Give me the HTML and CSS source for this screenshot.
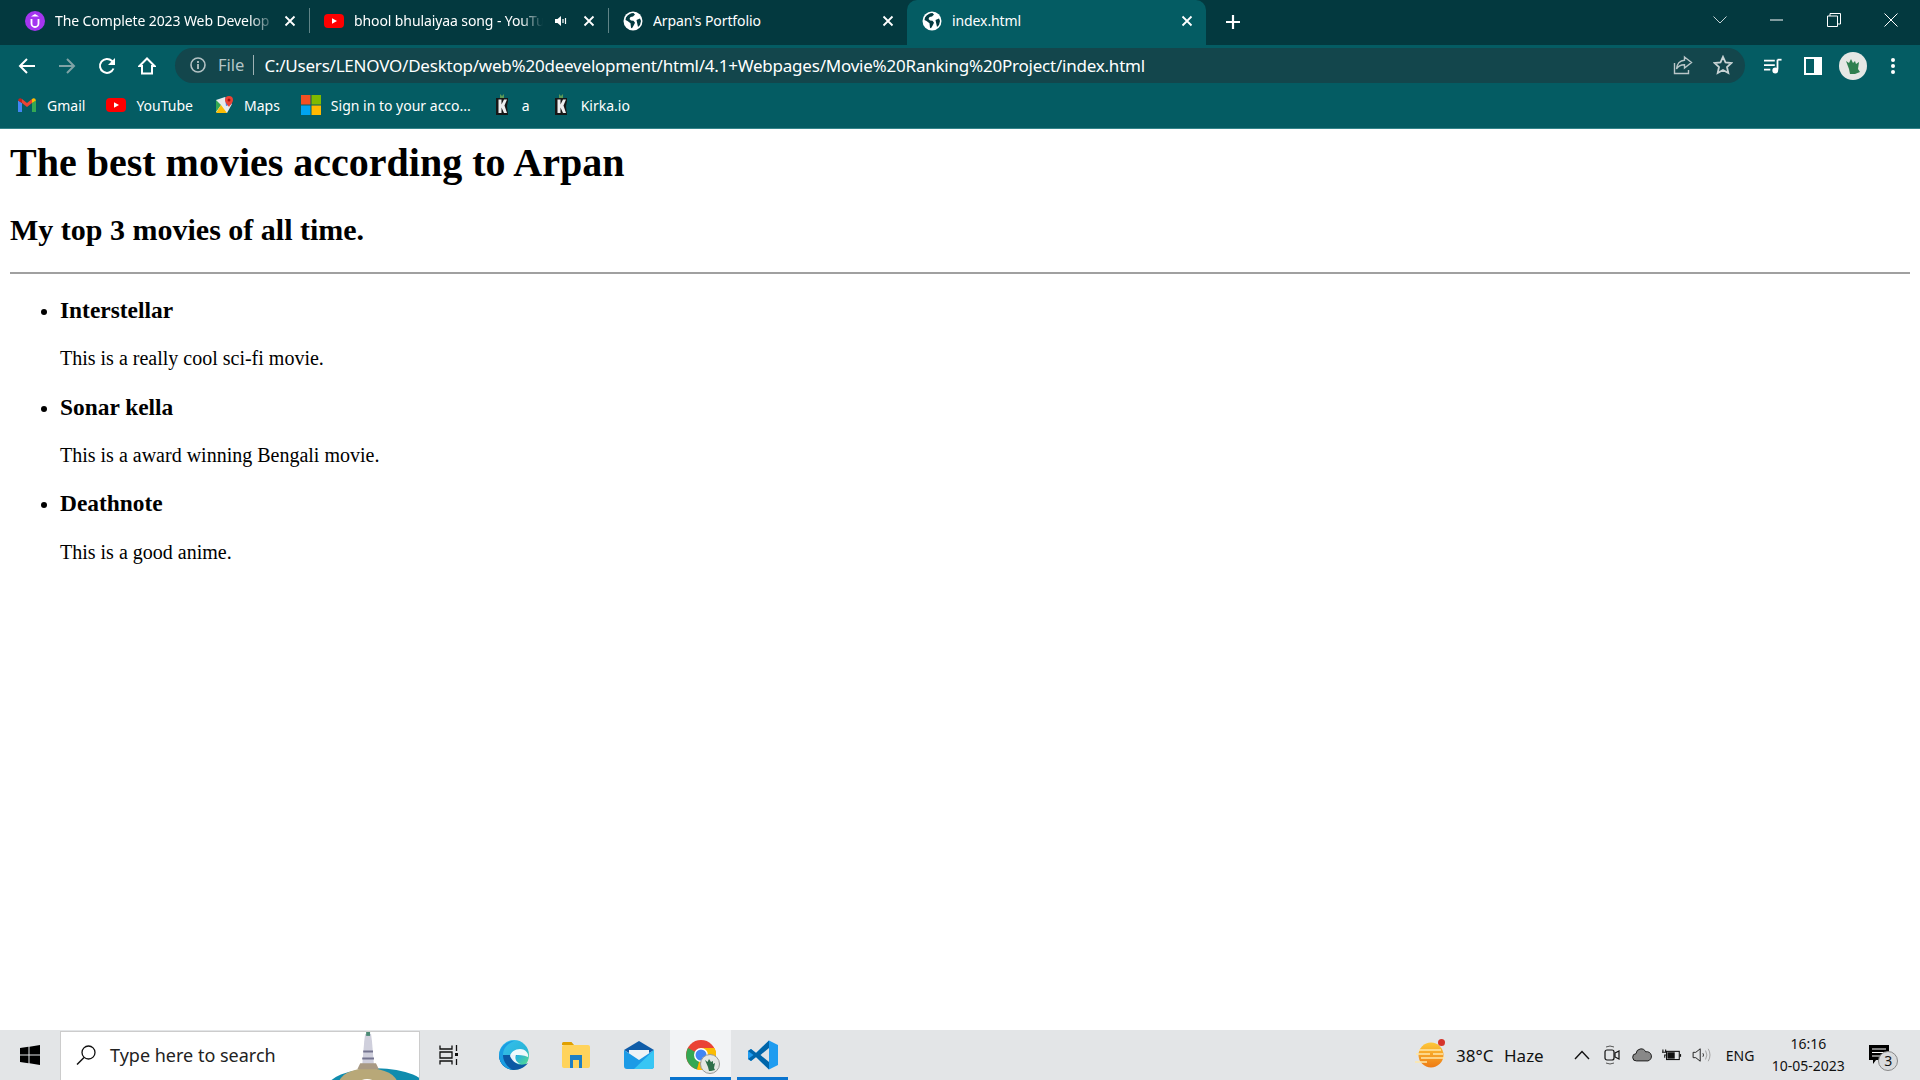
FILE: index.html
```html
<!DOCTYPE html>
<html lang="en">
<head>
<meta charset="utf-8">
<title>index.html</title>
<link rel="stylesheet" href="styles.css">
</head>
<body>
<svg class="defs" width="0" height="0" aria-hidden="true">
  <symbol id="globe" viewBox="0 0 20 20"><circle cx="10" cy="10" r="9.500" fill="#fff"/><path d="M3 6.500C5 3.500 7.500 2 10.500 2l1.500 1.500-2 2-2.500.5-1 2 1.500 1.500 2.500.2 1.500 2-1.500 3-1.500 2.500-1-.5-.5-4.500L4.500 10 2.500 9zM13.500 9l3.500-1.500 1 2.500-1 4-2 2z" fill="#03393f"/></symbol>
  <symbol id="close" viewBox="0 0 12 12"><path d="M1.500 1.500l9 9M10.500 1.500l-9 9" stroke="#fff" stroke-width="1.800" fill="none"/></symbol>
  <symbol id="yt" viewBox="0 0 20 14"><rect width="20" height="14" rx="4" fill="#f00"/><path d="M8 4.300l5 2.700-5 2.700z" fill="#fff"/></symbol>
  <symbol id="kirka" viewBox="0 0 14 22"><path d="M5 0l2 2 2-2v4H5z" fill="#5b9a57"/><path d="M1 4h12v3l-1 5 1 9H1z" fill="#171717"/><path d="M3.500 5.500h3v5l2.500-5h3l-2.500 6 2.500 7.500h-3l-2.500-5.500V19h-3z" fill="#eee"/></symbol>
</svg>
<div class="screen">
  <header class="chrome">
    <div class="tabstrip">
      <div class="tab">
        <svg class="favicon" viewBox="0 0 20 20"><circle cx="10" cy="10" r="10" fill="#a435f0"/><path d="M6.500 8v4.500a3.500 3.500 0 0 0 7 0V8" fill="none" stroke="#fff" stroke-width="1.800"/><path d="M10 3L6 5.500h8z" fill="#fff"/></svg>
        <span class="tab-title fade">The Complete 2023 Web Develop</span>
        <svg class="tab-close"><use href="#close"/></svg>
      </div>
      <div class="tab sep">
        <svg class="favicon"><use href="#yt"/></svg>
        <span class="tab-title fade short">bhool bhulaiyaa song - YouTu</span>
        <svg class="tab-audio" viewBox="0 0 14 12"><path d="M1 4h2.500L7 1v10L3.500 8H1z" fill="#fff"/><path d="M9 4v4M11.500 3v6" stroke="#fff" stroke-width="1.200"/></svg>
        <svg class="tab-close"><use href="#close"/></svg>
      </div>
      <div class="tab sep">
        <svg class="favicon"><use href="#globe"/></svg>
        <span class="tab-title">Arpan's Portfolio</span>
        <svg class="tab-close"><use href="#close"/></svg>
      </div>
      <div class="tab active">
        <svg class="favicon"><use href="#globe"/></svg>
        <span class="tab-title">index.html</span>
        <svg class="tab-close"><use href="#close"/></svg>
      </div>
      <svg class="new-tab" viewBox="0 0 16 16"><path d="M8 1v14M1 8h14" stroke="#fff" stroke-width="2.200"/></svg>
      <div class="window-controls">
        <svg viewBox="0 0 14 8" class="win-chevron"><path d="M.5.500L7 7 13.500.500" fill="none" stroke="#c4d3d5" stroke-width="1"/></svg>
        <svg viewBox="0 0 14 14" class="win-btn"><path d="M0 7h13" stroke="#fff" stroke-width="1"/></svg>
        <svg viewBox="0 0 14 14" class="win-btn"><path d="M.5 3h10v10.500H.5zM3 3V.5h10.500V11H10.500" fill="none" stroke="#fff" stroke-width="1"/></svg>
        <svg viewBox="0 0 14 14" class="win-btn"><path d="M.5.500l13 13M13.500.500l-13 13" stroke="#fff" stroke-width="1"/></svg>
      </div>
    </div>
    <div class="toolbar">
      <div class="tool"><svg viewBox="0 0 18 18"><path d="M17 9H2M9 2L2 9l7 7" fill="none" stroke="#fff" stroke-width="2"/></svg></div>
      <div class="tool"><svg viewBox="0 0 18 18"><path d="M1 9h15M9 2l7 7-7 7" fill="none" stroke="#7fa3a6" stroke-width="2"/></svg></div>
      <div class="tool"><svg viewBox="0 0 18 18"><path d="M15.500 11.500A7 7 0 1 1 14 4l2 2" fill="none" stroke="#fff" stroke-width="2"/><path d="M17 1v7h-7z" fill="#fff"/></svg></div>
      <div class="tool"><svg viewBox="0 0 18 18"><path d="M1.500 9L9 1.500 16.500 9H14v7.500H4V9z" fill="none" stroke="#fff" stroke-width="2"/></svg></div>
      <div class="omnibox">
        <svg class="info" viewBox="0 0 16 16"><circle cx="8" cy="8" r="7" fill="none" stroke="#b3c2c4" stroke-width="1.600"/><path d="M8 7v5M8 4v2" stroke="#b3c2c4" stroke-width="1.800"/></svg>
        <span class="scheme">File</span>
        <span class="url">C:/Users/LENOVO/Desktop/web%20deevelopment/html/4.1+Webpages/Movie%20Ranking%20Project/index.html</span>
        <svg class="omni-icon share" viewBox="0 0 20 20"><path d="M11.500 2l7 5.500-7 5.500V9.800C7.500 9.800 5 11 3.500 14 3.800 9 7 5.500 11.500 5.200z" fill="none" stroke="#b9c6c8" stroke-width="1.400"/><path d="M1.500 8v10.500h14V15" fill="none" stroke="#b9c6c8" stroke-width="1.400"/></svg>
        <svg class="omni-icon" viewBox="0 0 20 20"><path d="M10 1.800l2.500 5.500 6 .7-4.500 4 1.300 6L10 15l-5.300 3 1.300-6-4.500-4 6-.7z" fill="none" stroke="#c8d3d4" stroke-width="1.800"/></svg>
      </div>
      <div class="tool"><svg viewBox="0 0 20 18"><path d="M0 3h12M0 8h12M0 13h7" stroke="#fff" stroke-width="2"/><path d="M15 2v11" stroke="#fff" stroke-width="2"/><path d="M15 2h4.500" stroke="#fff" stroke-width="2"/><circle cx="12.500" cy="14" r="3.200" fill="#fff"/></svg></div>
      <div class="tool"><svg viewBox="0 0 18 18"><rect x="1" y="1" width="16" height="16" fill="none" stroke="#fff" stroke-width="2"/><rect x="10" y="1" width="7" height="16" fill="#fff"/></svg></div>
      <div class="tool"><svg class="avatar" viewBox="0 0 28 28"><circle cx="14" cy="14" r="14" fill="#e5e7e4"/><path d="M7 9l3 2 2-4 2 4 2-2 1 3 3-2-1 7 2 3-5 2h-5l-1-5z" fill="#2f7f4f"/></svg></div>
      <div class="tool"><svg viewBox="0 0 4 16" class="dots"><circle cx="2" cy="2" r="2" fill="#fff"/><circle cx="2" cy="8" r="2" fill="#fff"/><circle cx="2" cy="14" r="2" fill="#fff"/></svg></div>
    </div>
    <nav class="bookmarks">
      <a class="bookmark">
        <svg viewBox="0 0 18 14"><path d="M0 2.500V14h4V5z" fill="#4285f4"/><path d="M14 5v9h4V2.500z" fill="#34a853"/><path d="M14 1l-5 4-5-4v4l5 4 5-4z" fill="#ea4335"/><path d="M0 2.500L4 5V1L2.500.2Q.5 0 0 2.500z" fill="#c5221f"/><path d="M14 1v4l4-2.500Q17.500 0 15.500.2z" fill="#fbbc04"/></svg>
        <span>Gmail</span>
      </a>
      <a class="bookmark yt"><svg><use href="#yt"/></svg><span>YouTube</span></a>
      <a class="bookmark maps">
        <svg viewBox="0 0 18 18"><path d="M1 4l9-3 7 7-5 9-11-1z" fill="#e8eaed"/><path d="M1 4l5 5-5 7z" fill="#34a853"/><path d="M6 9l6 8H1z" fill="#fbbc04"/><path d="M10 1l7 7-6 2z" fill="#4285f4"/><path d="M14 0a4 4 0 0 1 4 4c0 3-3 5-4 7-1-2-4-4-4-7a4 4 0 0 1 4-4z" fill="#ea4335"/><circle cx="14" cy="4" r="1.500" fill="#a50e0e"/></svg>
        <span>Maps</span>
      </a>
      <a class="bookmark ms">
        <svg viewBox="0 0 20 20"><rect width="9.500" height="9.500" fill="#f25022"/><rect x="10.500" width="9.500" height="9.500" fill="#7fba00"/><rect y="10.500" width="9.500" height="9.500" fill="#00a4ef"/><rect x="10.500" y="10.500" width="9.500" height="9.500" fill="#ffb900"/></svg>
        <span>Sign in to your acco...</span>
      </a>
      <a class="bookmark kirka"><svg><use href="#kirka"/></svg><span>a</span></a>
      <a class="bookmark kirka"><svg><use href="#kirka"/></svg><span>Kirka.io</span></a>
    </nav>
  </header>
  <main class="page">
    <h1>The best movies according to Arpan</h1>
    <h2>My top 3 movies of all time.</h2>
    <hr>
    <ul>
      <li>
        <h3>Interstellar</h3>
        <p>This is a really cool sci-fi movie.</p>
      </li>
      <li>
        <h3>Sonar kella</h3>
        <p>This is a award winning Bengali movie.</p>
      </li>
      <li>
        <h3>Deathnote</h3>
        <p>This is a good anime.</p>
      </li>
    </ul>
  </main>
  <footer class="taskbar">
    <div class="start"><svg viewBox="0 0 20 20"><path d="M0 3l8.500-1.200v7.700H0zM9.500 1.700L20 0v9.500H9.500zM0 10.500h8.500v7.700L0 17zM9.500 10.500H20V20L9.500 18.300z" fill="#000"/></svg></div>
    <div class="searchbox">
      <svg class="magnifier" viewBox="0 0 20 20"><circle cx="12.500" cy="7.500" r="6.500" fill="none" stroke="#111" stroke-width="1.300"/><path d="M8 12.500L1 19.500" stroke="#111" stroke-width="1.500"/></svg>
      <span>Type here to search</span>
      <svg class="lighthouse" viewBox="0 0 92 50"><ellipse cx="50" cy="60" rx="52" ry="22" fill="#0f8cae"/><ellipse cx="41" cy="54" rx="30" ry="16" fill="#b8a878"/><ellipse cx="40" cy="63" rx="14" ry="14" fill="#fff"/><path d="M38 3h6l1 8 2 24H35l2-24z" fill="#cfcfdc"/><path d="M36 20h10v2H36zM35 27h12v2H35z" fill="#74748f"/><path d="M33 33h16l3 6H30z" fill="#a99a84"/><rect x="39" y="1" width="4" height="4" fill="#4c8a76"/></svg>
    </div>
    <div class="task-view"><svg viewBox="0 0 20 20"><path d="M1 .5v3.500h12V.5M1 19.500V16h12v3.500M1 7h12v6H1zM17.500 0v6M17.500 14v6" fill="none" stroke="#111" stroke-width="1.300"/><rect x="16" y="8" width="3" height="3" fill="#111"/></svg></div>
    <div class="app edge">
      <svg viewBox="0 0 30 30"><defs><linearGradient id="edgeA" x1="0" y1="0" x2="1" y2="1"><stop offset="0" stop-color="#35c1f1"/><stop offset=".6" stop-color="#2bb5d8"/><stop offset="1" stop-color="#66eb6e"/></linearGradient></defs><circle cx="15" cy="15" r="15" fill="url(#edgeA)"/><path d="M0 16C1 27 10 30 15 30c6 0 11-3 14-7-5 3-13 2-14-3-1-4 3-5 3-5H8C3 15 1 15 0 16z" fill="#0c59a4"/><path d="M17 15c3 0 7 0 12 2 1-3-2-8-8-8-5 0-9 3-10 7 2 5 6 8 11 8-4-1-7-5-5-9z" fill="#fff" opacity=".92"/><path d="M0 15C1 6 8 1 15 1c-6 2-11 7-11 14 0 6 4 12 10 15C6 29 0 23 0 15z" fill="#1b9de2"/></svg>
    </div>
    <div class="app">
      <svg viewBox="0 0 30 26"><path d="M0 1.500Q0 0 1.500 0h8L12 3H0z" fill="#e0a000"/><rect y="3" width="28" height="23" rx="2" fill="#ffd35c"/><path d="M8 13h12v13h-3v-8h-6v8H8z" fill="#1e7fc4"/></svg>
    </div>
    <div class="app">
      <svg viewBox="0 0 30 28"><path d="M0 9L15 0l15 9-15 9z" fill="#0f5ca8"/><path d="M5 9h20v9l-10 6-10-6z" fill="#eef3f6"/><path d="M0 9l15 10L30 9v16a3 3 0 0 1-3 3H3a3 3 0 0 1-3-3z" fill="#1c9be6"/><path d="M30 9v16a3 3 0 0 1-3 3H10z" fill="#38c6f4"/></svg>
    </div>
    <div class="app current">
      <span class="chrome-icon">
        <svg viewBox="0 0 30 30"><circle cx="15" cy="15" r="15" fill="#ea4335"/><path d="M15 15L2 8A15 15 0 0 0 11 29.500z" fill="#34a853"/><path d="M15 8h13.500A15 15 0 0 1 11 29.500L15 15z" fill="#fbbc04"/><circle cx="15" cy="15" r="7" fill="#fff"/><circle cx="15" cy="15" r="5.500" fill="#4285f4"/></svg>
        <svg class="chrome-badge" viewBox="0 0 20 20"><circle cx="10" cy="10" r="9.500" fill="#e5e7e4" stroke="#999"/><path d="M5 6l2.500 2L9 5l2 3 2-1v3l2-1-1 5 1 2-4 1H9l-1-4z" fill="#2f6f4a"/></svg>
      </span>
    </div>
    <div class="app open">
      <svg viewBox="0 0 30 30"><path d="M21 .5L30 5v20l-9 4.500L8 17l-5 4-3-2v-8l3-2 5 4z" fill="#1f9cf0"/><path d="M21 .5v29L8 17 3 21l-3-2 5.500-4L0 11l3-2 5 4z" fill="#0065a9"/><path d="M21 8v14l-8.500-7z" fill="#dfe3e7"/></svg>
    </div>
    <div class="weather">
      <span class="weather-icon">
        <svg viewBox="0 0 30 26"><defs><linearGradient id="sun" x1="0" y1="0" x2="0" y2="1"><stop offset="0" stop-color="#fdc83a"/><stop offset="1" stop-color="#ee7a14"/></linearGradient></defs><circle cx="16" cy="13" r="12.500" fill="url(#sun)"/><path d="M4 8h22M1 12h14M18 12h10M6 16h24M0 20h12" stroke="#ffe8a8" stroke-width="1.500"/></svg>
        <i class="weather-dot"></i>
      </span>
      <span class="temp">38°C</span>
      <span class="haze">Haze</span>
    </div>
    <div class="tray">
      <svg class="tray-caret" viewBox="0 0 16 10"><path d="M1 9l7-7.500L15 9" fill="none" stroke="#111" stroke-width="1.400"/></svg>
      <svg class="tray-icon" viewBox="0 0 18 20"><rect x="1" y="5" width="9" height="10" rx="2" fill="none" stroke="#111" stroke-width="1.200"/><path d="M11 8l4-2v8l-4-2z" fill="none" stroke="#111" stroke-width="1.200"/><path d="M2 2q4-2 8 0M2 18q4 2 8 0" fill="none" stroke="#555" stroke-width="1"/></svg>
      <svg class="tray-icon wide" viewBox="0 0 22 14"><path d="M5 13.500a4 4 0 0 1-.5-8A5.500 5.500 0 0 1 15 3.500a4.500 4.500 0 0 1 2.500 10z" fill="#888" stroke="#111" stroke-width="1"/></svg>
      <svg class="tray-icon wide" viewBox="0 0 22 14"><path d="M1 1v3M4 1v3M0 4h5v3H3v3" fill="none" stroke="#111" stroke-width="1.200"/><rect x="5" y="3" width="14" height="9" fill="none" stroke="#111" stroke-width="1.200"/><rect x="6" y="4" width="8" height="7" fill="#111"/><rect x="19.500" y="6" width="1.500" height="3" fill="#111"/></svg>
      <svg class="tray-icon wide" viewBox="0 0 22 18"><path d="M1 6h3l5-4v14l-5-4H1z" fill="none" stroke="#222" stroke-width="1.100"/><path d="M12 7q1.500 2 0 4" fill="none" stroke="#222"/><path d="M15 4q3 5 0 10M18 2q4 7 0 14" fill="none" stroke="#999"/></svg>
    </div>
    <span class="lang">ENG</span>
    <div class="clock"><span>16:16</span><span>10-05-2023</span></div>
    <div class="notify">
      <svg viewBox="0 0 20 20"><path d="M0 0h20v15H7l-3 4v-4H0z" fill="#000"/><path d="M3 4h14M3 7.500h14M3 11h14" stroke="#fff" stroke-width="1"/></svg>
      <b class="notify-badge">3</b>
    </div>
  </footer>
</div>
</body>
</html>
```
FILE: styles.css
```css
* { box-sizing: border-box; }
html, body { margin: 0; padding: 0; height: 100%; overflow: hidden; }
body { background: #fff; }
.defs { display: block; height: 0; width: 0; }
.screen { display: flex; flex-direction: column; height: 1080px; width: 1920px; }

.chrome { flex: none; color: #fff; font-family: "Noto Sans", sans-serif; background: #045c63; border-bottom: 1px solid #35848a; height: 129px; }
.tabstrip { display: flex; align-items: stretch; height: 45px; background: #03393f; padding-left: 10px; }
.tab { position: relative; width: 299px; display: flex; align-items: center; padding: 0 13px 4px 15px; font-size: 14px; }
.tab.sep::before { content: ""; position: absolute; left: 0; top: 8px; height: 25px; width: 1px; background: #5f8487; }
.tab.active { background: #045c63; border-radius: 10px 10px 0 0; }
.favicon { width: 20px; height: 20px; flex: none; margin-right: 10px; }
.tab-title { flex: 1; white-space: nowrap; overflow: hidden; letter-spacing: -.1px; }
.tab-title.fade { -webkit-mask-image: linear-gradient(to right, #000 88%, transparent); mask-image: linear-gradient(to right, #000 88%, transparent); }
.tab-title.short { flex: 0 0 189px; }
.tab-audio { width: 14px; height: 12px; flex: none; margin: 0 7px 0 auto; }
.tab-close { width: 12px; height: 12px; flex: none; margin-left: 8px; }
.new-tab { width: 16px; height: 16px; align-self: center; margin: 0 0 2px 19px; }
.window-controls { margin-left: auto; display: flex; align-items: center; padding: 0 22px 6px 0; gap: 43px; }
.win-chevron { width: 14px; height: 8px; }
.win-btn { width: 14px; height: 14px; }

.toolbar { display: flex; align-items: center; height: 41px; padding: 0 7px; }
.tool { width: 40px; height: 40px; display: flex; align-items: center; justify-content: center; flex: none; }
.tool svg { width: 18px; height: 18px; }
.tool svg.avatar { width: 28px; height: 28px; }
.tool svg.dots { width: 4px; height: 16px; }
.omnibox { flex: 1; height: 35px; margin: 0 8px; border-radius: 18px; background: #13464c; display: flex; align-items: center; padding: 0 12px 1px 15px; font-size: 17px; }
.info { width: 16px; height: 16px; flex: none; margin-right: 12px; }
.scheme { color: #b5c5c7; padding-right: 9px; border-right: 1px solid #9fb2b4; line-height: 20px; margin-right: 10px; font-size: 16.500px; }
.url { flex: 1; white-space: nowrap; letter-spacing: -.22px; }
.omni-icon { width: 20px; height: 20px; flex: none; }
.omni-icon.share { margin-right: 20px; }

.bookmarks { display: flex; align-items: center; height: 42px; padding: 0 0 4px 18px; gap: 22px; font-size: 14px; }
.bookmark { display: flex; align-items: center; gap: 11px; }
.bookmark svg { width: 18px; height: 14px; flex: none; }
.bookmark.yt svg { width: 20px; height: 14px; }
.bookmark.yt { gap: 10px; margin-left: -1px; }
.bookmark.maps svg { height: 18px; }
.bookmark.ms { gap: 10px; margin-left: -1px; }
.bookmark.ms svg { width: 20px; height: 20px; }
.bookmark.kirka svg { width: 14px; height: 22px; }
.bookmark.kirka { gap: 13px; margin-left: 2px; }

.page { flex: 1; padding: 11px 10px 0; font-family: "Liberation Serif", serif; color: #000; font-size: 20px; overflow: hidden; }
.page h1 { font-size: 40px; margin: 0 0 26.800px; line-height: 46px; }
.page h2 { font-size: 30px; margin: 0 0 25px; line-height: 34px; }
.page hr { margin: 0 0 20px; border: 0; background: #a0a0a0; height: 2px; }
.page ul { margin: 0; padding: 0 0 0 50px; }
.page h3 { font-size: 23.400px; margin: 23.400px 0; line-height: 27px; }
.page li:first-child h3 { margin-top: 0; padding-top: 3px; }
.page p { margin: 23.400px 0; line-height: 23px; }

.taskbar { flex: none; height: 50px; background: #e3e5e7; display: flex; align-items: center; color: #111; font-family: "Noto Sans", sans-serif; }
.start { width: 60px; display: flex; justify-content: center; }
.start svg { width: 20px; height: 20px; }
.searchbox { position: relative; width: 360px; height: 49px; margin-top: 1px; background: #fff; border: 1px solid #ccc; border-width: 1px 1px 0; display: flex; align-items: center; font-size: 18px; padding: 0 0 2px 15px; overflow: hidden; color: #222; }
.magnifier { width: 20px; height: 20px; margin-right: 14px; }
.lighthouse { position: absolute; right: 0; bottom: 0; width: 92px; height: 49px; }
.task-view { width: 58px; display: flex; justify-content: center; }
.task-view svg { width: 20px; height: 20px; }
.app { width: 62px; height: 50px; display: flex; align-items: center; justify-content: center; }
.app.edge { margin-left: 4px; width: 64px; padding-right: 1px; }
.app svg { width: 30px; height: 30px; }
.app.current { width: 61px; background: #f2f3f5; border-bottom: 3px solid #0a74cf; padding-top: 3px; }
.app.open { width: 51px; margin-left: 6px; border-bottom: 3px solid #0a74cf; padding-top: 3px; }
.chrome-icon { position: relative; width: 30px; height: 30px; display: block; }
.chrome-icon svg.chrome-badge { position: absolute; right: -4px; bottom: -4px; width: 20px; height: 20px; }
.weather { margin-left: 627px; display: flex; align-items: center; font-size: 17px; }
.weather-icon { position: relative; width: 30px; height: 26px; margin-right: 11px; }
.weather-icon svg { width: 30px; height: 26px; display: block; }
.weather-dot { position: absolute; top: -3px; right: 0; width: 7px; height: 7px; border-radius: 50%; background: #d6342b; }
.temp { width: 48px; }
.tray { margin-left: 30px; display: flex; align-items: center; gap: 10px; }
.tray-caret { width: 16px; height: 10px; margin-right: 4px; }
.tray-icon { width: 18px; height: 20px; }
.tray-icon.wide { width: 20px; height: 16px; }
.lang { margin-left: 14px; font-size: 14px; }
.clock { margin-left: 16px; width: 76px; display: flex; flex-direction: column; align-items: center; font-size: 14px; line-height: 22px; }
.notify { position: relative; margin-left: 23px; width: 20px; height: 20px; }
.notify svg { width: 20px; height: 20px; display: block; }
.notify-badge { position: absolute; left: 9px; top: 6px; width: 20px; height: 20px; border-radius: 50%; border: 1px solid #888; background: #d9dbdd; font-size: 14px; font-weight: 400; text-align: center; line-height: 18px; }
```
